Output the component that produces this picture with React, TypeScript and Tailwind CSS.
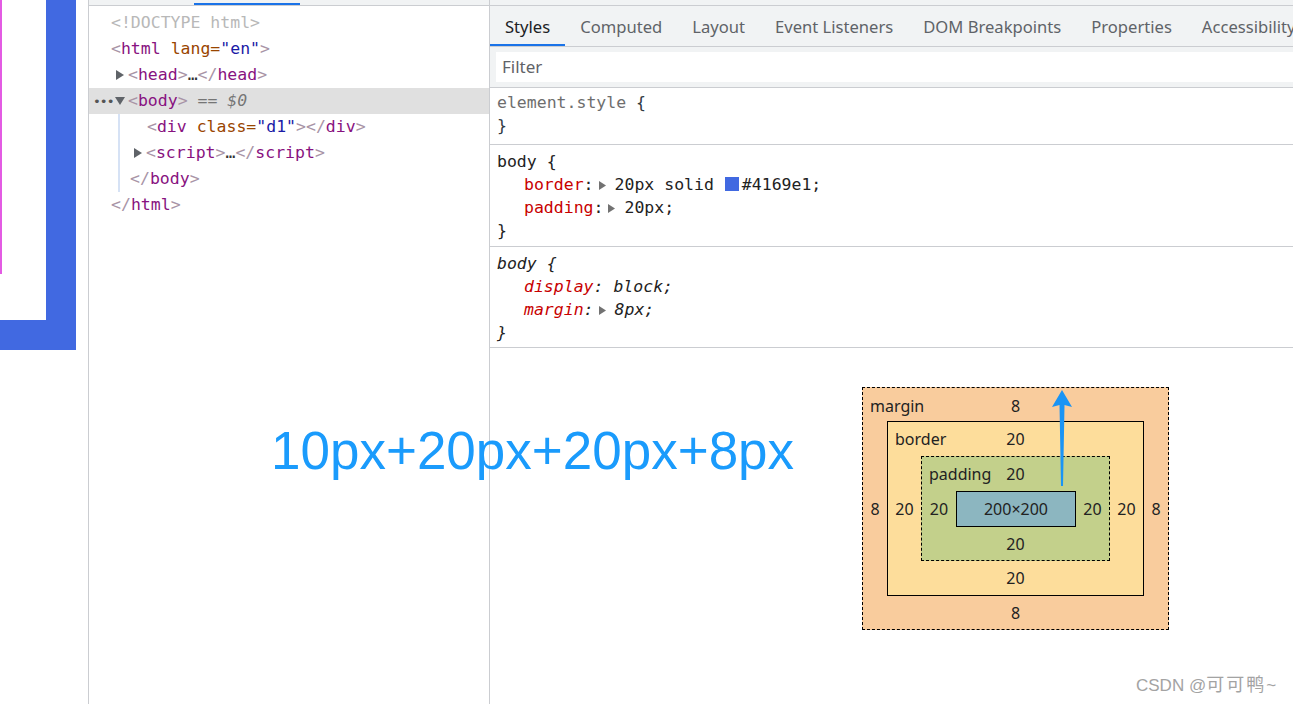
import React from "react";

const mono = { fontFamily: '"DejaVu Sans Mono", "Liberation Mono", monospace' };
const ui = { fontFamily: '"Noto Sans", "Open Sans", sans-serif' };

const Tri = ({ dir = "right", color = "#5f6368" }: { dir?: "right" | "down"; color?: string }) =>
  dir === "right" ? (
    <svg width="8" height="10" viewBox="0 0 8 10">
      <path d="M0 0 L8 5 L0 10 Z" fill={color} />
    </svg>
  ) : (
    <svg width="10" height="8" viewBox="0 0 10 8">
      <path d="M0 0 L10 0 L5 8 Z" fill={color} />
    </svg>
  );

const B = ({ children }: { children: React.ReactNode }) => <span className="text-[#a894a6]">{children}</span>;
const T = ({ children }: { children: React.ReactNode }) => <span className="text-[#881280]">{children}</span>;

const PropTri = () => (
  <span className="inline-flex w-[21px] items-center pl-[5px] align-middle">
    <svg width="7" height="9" viewBox="0 0 7 9">
      <path d="M0 0 L7 4.5 L0 9 Z" fill="#727272" />
    </svg>
  </span>
);

function DomPanel() {
  return (
    <div className="w-[401px] h-full border-r border-[#cbcdd1] flex flex-col text-[16.5px]" style={mono}>
      <div className="h-[6px] bg-[#f1f3f4] border-b border-[#cbcdd1] flex items-end">
        <div className="ml-[105px] w-[106px] h-[2px] bg-[#1a73e8]" />
      </div>
      <div className="pt-[4px] whitespace-pre">
        <div className="h-[26px] flex items-center pl-[22px] text-[#b8b8b8]">
          <span>&lt;!DOCTYPE html&gt;</span>
        </div>
        <div className="h-[26px] flex items-center pl-[22px]">
          <span>
            <B>&lt;</B><T>html</T> <span className="text-[#994500]">lang=</span><span className="text-[#1a1aa6]">"en"</span><B>&gt;</B>
          </span>
        </div>
        <div className="h-[26px] flex items-center pl-[27px]">
          <span className="w-[12px] flex"><Tri /></span>
          <span>
            <B>&lt;</B><T>head</T><B>&gt;</B><span className="text-[#333]">…</span><B>&lt;/</B><T>head</T><B>&gt;</B>
          </span>
        </div>
        <div className="h-[26px] flex items-center pl-[4px] bg-[#e0e0e0]">
          <span className="w-[22px] text-[#555] text-[13px] tracking-[-1px] leading-none">•••</span>
          <span className="w-[13px] flex"><Tri dir="down" /></span>
          <span>
            <B>&lt;</B><T>body</T><B>&gt;</B> <span className="italic text-[#757575]">== $0</span>
          </span>
        </div>
        <div className="ml-[29px] border-l-[2px] border-[#d6e2f5]">
          <div className="h-[26px] flex items-center pl-[27px]">
            <span>
              <B>&lt;</B><T>div</T> <span className="text-[#994500]">class=</span><span className="text-[#1a1aa6]">"d1"</span><B>&gt;&lt;/</B><T>div</T><B>&gt;</B>
            </span>
          </div>
          <div className="h-[26px] flex items-center pl-[14px]">
            <span className="w-[12px] flex"><Tri /></span>
            <span>
              <B>&lt;</B><T>script</T><B>&gt;</B><span className="text-[#333]">…</span><B>&lt;/</B><T>script</T><B>&gt;</B>
            </span>
          </div>
          <div className="h-[26px] flex items-center pl-[10px]">
            <span><B>&lt;/</B><T>body</T><B>&gt;</B></span>
          </div>
        </div>
        <div className="h-[26px] flex items-center pl-[22px]">
          <span><B>&lt;/</B><T>html</T><B>&gt;</B></span>
        </div>
      </div>
    </div>
  );
}

const tabs = ["Styles", "Computed", "Layout", "Event Listeners", "DOM Breakpoints", "Properties", "Accessibility"];

function Line({ children, indent }: { children: React.ReactNode; indent?: boolean }) {
  return (
    <div className={`h-[23px] flex items-center ${indent ? "pl-[27px]" : ""}`}>
      <span>{children}</span>
    </div>
  );
}

function BoxModel() {
  return (
    <div className="relative ml-[372px] mt-[39px] w-[307px] h-[243px] border border-dashed border-black bg-[#f9cc9d] flex flex-col text-[16px] text-[#222]" style={ui}>
      <div className="h-[35px] grid grid-cols-[1fr_auto_1fr] items-center">
        <span className="pl-[7px]">margin</span>
        <span>8</span>
        <span />
      </div>
      <div className="flex h-[175px] -mt-[2px]">
        <div className="w-[24px] flex items-center justify-center">8</div>
        <div className="w-[257px] border border-black bg-[#fddd9b] flex flex-col">
          <div className="h-[34px] grid grid-cols-[1fr_auto_1fr] items-center">
            <span className="pl-[7px]">border</span>
            <span>20</span>
            <span />
          </div>
          <div className="flex h-[105px]">
            <div className="w-[33px] flex items-center justify-center">20</div>
            <div className="w-[189px] border border-dashed border-black bg-[#c3d08b] flex flex-col">
              <div className="h-[34px] grid grid-cols-[1fr_auto_1fr] items-center">
                <span className="pl-[7px]">padding</span>
                <span>20</span>
                <span />
              </div>
              <div className="flex h-[36px]">
                <div className="w-[34px] flex items-center justify-center">20</div>
                <div className="w-[120px] border border-black bg-[#8cb6c0] flex items-center justify-center">200×200</div>
                <div className="w-[33px] flex items-center justify-center">20</div>
              </div>
              <div className="flex-1 flex items-center justify-center">20</div>
            </div>
            <div className="w-[33px] flex items-center justify-center">20</div>
          </div>
          <div className="flex-1 flex items-center justify-center">20</div>
        </div>
        <div className="w-[24px] flex items-center justify-center">8</div>
      </div>
      <div className="flex-1 flex items-center justify-center">8</div>
      <svg className="absolute left-[188px] top-[2px]" width="22" height="98" viewBox="0 0 22 98">
        <path d="M11 0 L21 17 L13.5 15 L12 96 L10 96 L8.5 15 L1 17 Z" fill="#1a94f5" />
      </svg>
    </div>
  );
}

function StylesPanel() {
  return (
    <div className="flex-1 h-full flex flex-col overflow-hidden">
      <div className="h-[6px] bg-[#f1f3f4] border-b border-[#cbcdd1]" />
      <div className="h-[41px] bg-[#f1f3f4] border-b border-[#cbcdd1] flex text-[16.6px] whitespace-nowrap" style={ui}>
        {tabs.map((t, i) => (
          <div key={t} className="flex flex-col shrink-0 px-[15px]">
            <div className={`flex-1 flex items-center pt-[4px] ${i === 0 ? "text-[#202124]" : "text-[#5f6368]"}`}>{t}</div>
            <div className={`h-[2px] -mx-[15px] ${i === 0 ? "bg-[#1a73e8]" : ""}`} />
          </div>
        ))}
      </div>
      <div className="h-[41px] bg-[#f1f3f4] border-b border-[#cbcdd1] flex items-center pl-[6px]">
        <div className="flex-1 h-[30px] bg-white flex items-center pl-[6px] text-[17px] text-[#5f6368]" style={ui}>Filter</div>
      </div>
      <div className="text-[16.5px] whitespace-pre text-[#222]" style={mono}>
        <div className="pt-[4px] pb-[6px] pl-[7px] border-b border-[#cbcdd1]">
          <Line><span className="text-[#6e6e6e]">element.style</span> <span className="text-[#303942]">{"{"}</span></Line>
          <Line><span className="text-[#303942]">{"}"}</span></Line>
        </div>
        <div className="pt-[6px] pb-[3px] pl-[7px] border-b border-[#cbcdd1]">
          <Line>body {"{"}</Line>
          <Line indent>
            <span className="text-[#c80000]">border</span>:<PropTri />20px solid <span className="ml-[1px] mr-[3px] w-[14px] h-[14px] bg-[#4169e1] inline-block align-[-1px]" />#4169e1;
          </Line>
          <Line indent>
            <span className="text-[#c80000]">padding</span>:<PropTri />20px;
          </Line>
          <Line>{"}"}</Line>
        </div>
        <div className="pt-[6px] pb-[2px] pl-[7px] border-b border-[#cbcdd1] italic">
          <Line>body {"{"}</Line>
          <Line indent>
            <span className="text-[#c80000]">display</span>: block;
          </Line>
          <Line indent>
            <span className="text-[#c80000]">margin</span>:<PropTri />8px;
          </Line>
          <Line>{"}"}</Line>
        </div>
      </div>
      <BoxModel />
    </div>
  );
}

export default function App() {
  return (
    <div className="relative w-[1293px] h-[704px] overflow-hidden bg-white flex">
      <div className="w-[89px] h-full border-r border-[#cbcdd1]">
        <div className="w-[76px] h-[350px] border-r-[30px] border-b-[30px] border-[#4169e1]">
          <div className="w-[2px] h-[274px] bg-[#e35be3]" />
        </div>
      </div>
      <DomPanel />
      <StylesPanel />
      <div
        className="absolute left-[271px] top-[424px] text-[53px] leading-[53px] text-[#1a9bfc] whitespace-nowrap"
        style={{ fontFamily: '"Liberation Sans", Arial, sans-serif' }}
      >
        10px+20px+20px+8px
      </div>
      <div
        className="absolute left-[1136px] top-[674px] text-[17px] leading-[22px] text-[#a3a3a3] whitespace-nowrap"
        style={{ fontFamily: '"Liberation Sans", "Noto Sans CJK SC", sans-serif' }}
      >
        CSDN @<span className="text-[18px] tracking-[2px]">可可鸭</span>~
      </div>
    </div>
  );
}
